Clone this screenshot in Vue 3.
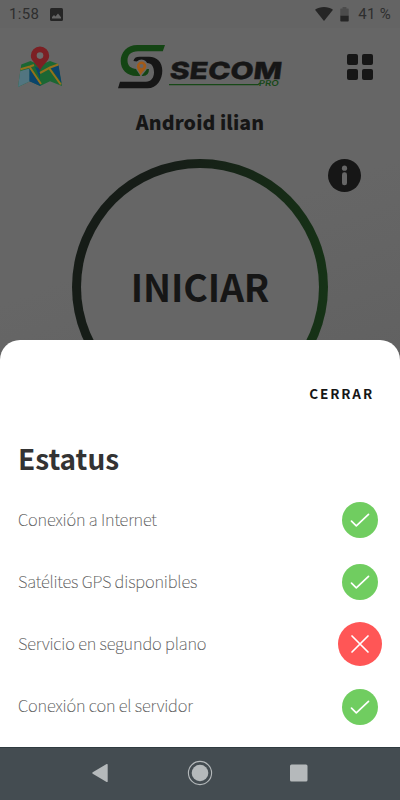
<template>
  <div class="phone">
    <div class="app-screen">
      <div class="status-bar">
        <div class="status-left">
          <span>1:58</span>
          <svg class="image-icon" viewBox="0 0 13 13">
            <rect width="13" height="13" rx="1.5" fill="#252525" />
            <path d="M2 10.6V9l2-2 1.5 1.5L8 5.5l3 3.7v1.4z" fill="#666" />
          </svg>
        </div>
        <div class="status-right">
          <svg class="wifi-icon" viewBox="0 0 18 14">
            <path d="M0 2.7C5-.8 13-.8 18 2.7L9 14z" fill="#252525" />
          </svg>
          <svg class="battery-icon" viewBox="0 0 9 15">
            <path d="M2.6 0h3.8v1.4H8q.7 0 .7.7V9H.3V2.1q0-.7.7-.7h1.6z" fill="#4c4c4c" />
            <path d="M.3 8.8h8.4v5q0 .8-.8.8H1.1q-.8 0-.8-.8z" fill="#252525" />
          </svg>
          <span>41 %</span>
        </div>
      </div>

      <header class="header">
        <svg class="map-icon" viewBox="0 0 44 42">
          <path d="M3.3 18.5l9.2-3.5 9.5 4 10-4 8 3 4 22-12-4.7L22 40l-10-4.700L0 41z" fill="#1b6733" />
          <path d="M2.300 25l9.200-2.500.5 12.800L0 41z" fill="#527580" />
          <path d="M11.500 22.500L22.500 38.500V40L11.300 35.300z" fill="#0a446c" />
          <path d="M17 20.500l5 2.500v10z" fill="#0a446c" />
          <path d="M32.500 21.500l8-2.500L43.500 37z" fill="#0a446c" />
          <path d="M2.500 23.300l9.500-2.800 4-1.500M12 21.500L23 38" class="road" />
          <path d="M22 27l10-5.500 8.300-3M31 22l11.800 16.500" class="road" />
          <path d="M22 24.500C19 18 12.800 15 12.800 9.700a9.200 9.200 0 0 1 18.400 0C31.200 15 25 18 22 24.500z" fill="#7c2024" />
          <circle cx="22" cy="9.600" r="3.300" fill="#6c6c6c" />
        </svg>

        <svg class="logo" viewBox="0 0 166 48">
          <path
            d="M47 1H19.500C9 1 2.700 8.500 2.700 17S9 32 18.500 32H25q6 0 6-7H18.500C13 24.500 9.500 22 9.500 16.500S13 7.300 20 7.300h24.800z"
            fill="#144514"
          />
          <path
            d="M15.500 17q.5-4.300 6-4.300H31c8 0 13.300 5.500 13.300 14S39 44.300 29.500 44.300H0l2-6.500h26c5 0 8-4 8-9.500 0-5-2-9.300-7-9.300z"
            fill="#161616"
          />
          <path d="M22.800 34C22 29 17.300 27 17.300 21.600a6.200 6.200 0 0 1 12.400 0C29.700 27 24.500 29 22.800 34z" fill="#686868" />
          <path d="M22.300 31.500c-.3-4-3.400-6-3.400-9.300a4.700 4.700 0 0 1 9.400 0c0 3.500-4.500 5.300-6 9.300z" fill="#a35a17" />
          <circle cx="23.500" cy="22" r="2" fill="#666" />
          <text
            class="logo-name"
            transform="translate(51 34.500) skewX(-7)"
            textLength="112"
            lengthAdjust="spacingAndGlyphs"
          >SECOM</text>
          <path d="M51 40.700h89l2-1.700" class="logo-line" />
          <text
            class="logo-pro"
            transform="translate(140.500 41.800) skewX(-8)"
            textLength="20"
            lengthAdjust="spacingAndGlyphs"
          >PRO</text>
        </svg>

        <div class="grid-icon">
          <i v-for="n in 4" :key="n"></i>
        </div>
      </header>

      <h1 class="device-name">Android ilian</h1>

      <div class="start-area">
        <div class="start-button">
          <div class="start-inner">INICIAR</div>
        </div>
        <svg class="info-icon" viewBox="0 0 33 33">
          <circle cx="16.500" cy="16.500" r="16.500" fill="#161616" />
          <circle cx="16.500" cy="9.200" r="2.600" fill="#666" />
          <rect x="14" y="13.200" width="5" height="13" rx="2.300" fill="#666" />
        </svg>
      </div>
    </div>

    <section class="sheet">
      <button class="close">CERRAR</button>
      <h2 class="sheet-title">Estatus</h2>
      <ul class="status-list">
        <li v-for="item in items" :key="item.label">
          <span>{{ item.label }}</span>
          <div class="mark" :class="{ error: !item.ok }">
            <svg v-if="item.ok" viewBox="0 0 20 16">
              <path d="M1.5 9.2l4.8 4.6L18.5 2.3" />
            </svg>
            <svg v-else class="cross" viewBox="0 0 20 20">
              <path d="M2 2l16 16M18 2L2 18" />
            </svg>
          </div>
        </li>
      </ul>
    </section>

    <nav class="nav-bar">
      <svg viewBox="0 0 26 26">
        <path d="M5.7 12.3L19.6 4q1.1-.4 1.1.8v16.4q0 1.2-1.1.8L5.7 13.7q-1-.7 0-1.4z" />
      </svg>
      <svg viewBox="0 0 26 26">
        <circle cx="13" cy="13" r="11.6" class="ring" />
        <circle cx="13" cy="13" r="8.3" />
      </svg>
      <svg viewBox="0 0 26 26">
        <rect x="4" y="4.5" width="17.5" height="17" rx="1.5" />
      </svg>
    </nav>
  </div>
</template>

<script setup>
const items = [
  { label: 'Conexión a Internet', ok: true },
  { label: 'Satélites GPS disponibles', ok: true },
  { label: 'Servicio en segundo plano', ok: false },
  { label: 'Conexión con el servidor', ok: true }
]
</script>

<style>
body {
  margin: 0;
}
</style>

<style scoped>
.phone {
  width: 400px;
  height: 800px;
  display: flex;
  flex-direction: column;
  overflow: hidden;
  background: #666;
  font-family: 'Noto Sans CJK SC', 'Noto Sans', sans-serif;
  box-sizing: border-box;
}

.phone * {
  box-sizing: border-box;
}

svg {
  display: block;
  flex-shrink: 0;
}

/* the part dimmed by the open sheet */
.app-screen {
  height: 360px;
  flex-shrink: 0;
  overflow: hidden;
  background: linear-gradient(160deg, #666 60%, #616161);
}

.status-bar {
  height: 28px;
  padding: 0 9px;
  display: flex;
  justify-content: space-between;
  align-items: center;
  background: #646464;
  color: #2e2e2e;
  font-family: Roboto, sans-serif;
  font-size: 15px;
  letter-spacing: 0.3px;
}

.status-left,
.status-right {
  display: flex;
  align-items: center;
}

.image-icon {
  width: 13px;
  height: 13px;
  margin-left: 11px;
}

.wifi-icon {
  width: 18px;
  height: 14px;
  margin-right: 7px;
}

.battery-icon {
  width: 9px;
  height: 15px;
  margin-right: 9px;
}

.header {
  height: 72px;
  padding: 16px 27px 0 18px;
  display: flex;
  align-items: flex-start;
}

.map-icon {
  width: 44px;
  height: 42px;
  margin-top: 2px;
}

.road {
  fill: none;
  stroke: #94701d;
  stroke-width: 2;
}

.logo {
  width: 166px;
  height: 48px;
  margin-left: 56px;
}

.logo-name {
  font: 800 23.5px Inter, sans-serif;
  fill: #161616;
  stroke: #161616;
  stroke-width: 0.4px;
}

.logo-pro {
  font: 600 8px Inter, sans-serif;
  fill: #174817;
}

.logo-line {
  fill: none;
  stroke: #174817;
  stroke-width: 1.3;
}

.grid-icon {
  width: 26px;
  margin: 10px 0 0 auto;
  display: grid;
  grid-template-columns: 11px 11px;
  gap: 4px;
}

.grid-icon i {
  height: 11px;
  border-radius: 2px;
  background: #161616;
}

.device-name {
  margin: 0;
  height: 59px;
  padding-top: 7px;
  text-align: center;
  font-size: 19.5px;
  line-height: 30px;
  font-weight: 900;
  letter-spacing: 0.1px;
  color: #161616;
}

.start-area {
  display: flex;
  align-items: flex-start;
  padding-left: 72px;
}

.start-button {
  width: 256px;
  height: 256px;
  flex-shrink: 0;
  padding: 9px;
  border-radius: 50%;
  background: linear-gradient(100deg, #161c17 30%, #163516 100%);
}

.start-inner {
  height: 100%;
  padding: 0 0 3px;
  border-radius: 50%;
  background: #666;
  display: flex;
  align-items: center;
  justify-content: center;
  font-size: 37.5px;
  font-weight: 700;
  line-height: 56px;
  letter-spacing: -0.1px;
  color: #161616;
}

.info-icon {
  width: 33px;
  height: 33px;
}

.sheet {
  height: 407px;
  margin-top: -20px;
  padding: 0 18px;
  flex-shrink: 0;
  border-radius: 20px 20px 0 0;
  background: #fff;
  position: relative;
}

.close {
  display: block;
  margin: 41px 8px 0 auto;
  padding: 0;
  border: 0;
  background: none;
  font: 700 13.5px/24px 'Noto Sans CJK SC', sans-serif;
  letter-spacing: 1.9px;
  color: #161616;
}

.sheet-title {
  margin: 32px 0 0;
  font-size: 28px;
  line-height: 42px;
  font-weight: 700;
  color: #333;
}

.status-list {
  list-style: none;
  margin: 10px 0 0;
  padding: 0;
}

.status-list li {
  height: 62.2px;
  padding-right: 4px;
  display: flex;
  align-items: center;
  justify-content: space-between;
  font-size: 16.5px;
  font-weight: 100;
  letter-spacing: -0.16px;
  color: #555;
  -webkit-text-stroke: 0.15px #555;
}

.status-list span {
  padding-bottom: 3px;
}

.mark {
  width: 36px;
  height: 36px;
  display: flex;
  align-items: center;
  justify-content: center;
  border-radius: 50%;
  background: #70cd60;
}

.mark.error {
  width: 44px;
  height: 44px;
  margin-right: -4px;
  background: #ff5656;
}

.mark svg {
  width: 20px;
  height: 16px;
}

.mark .cross {
  height: 20px;
}

.mark path {
  fill: none;
  stroke: #fff;
  stroke-width: 1.7;
  stroke-linecap: round;
  stroke-linejoin: round;
}

.nav-bar {
  height: 53px;
  flex-shrink: 0;
  padding: 0 88px 2px 87px;
  display: flex;
  align-items: center;
  justify-content: space-between;
  background: #444c51;
  border-top: 1px solid #2f3b40;
}

.nav-bar svg {
  width: 26px;
  height: 26px;
  fill: #b5b9bb;
}

.nav-bar .ring {
  fill: none;
  stroke: #b5b9bb;
  stroke-width: 1.1;
}
</style>
